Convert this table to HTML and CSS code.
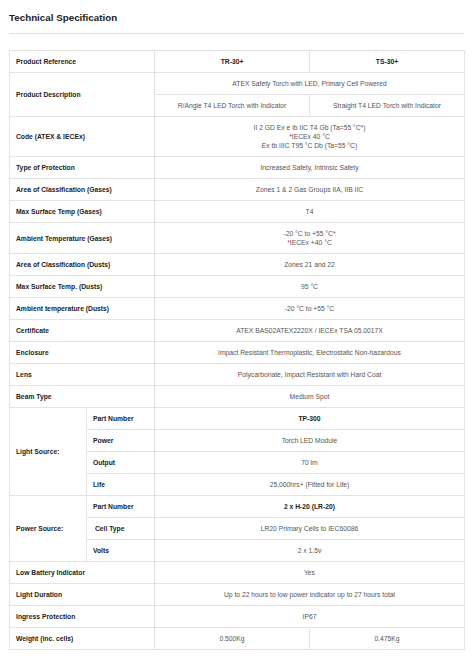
FILE: index.html
```html
<!DOCTYPE html>
<html>
<head>
<meta charset="utf-8">
<link rel="stylesheet" href="styles.css">
</head>
<body>
<div class="page">
  <h1 class="title">Technical Specification</h1>
  <div class="rule"></div>
  <table class="spec">
    <colgroup>
      <col class="c1"><col class="c2"><col class="c3"><col class="c4">
    </colgroup>
    <tr><th colspan="2">Product Reference</th><td class="b">TR-30+</td><td class="b">TS-30+</td></tr>
    <tr><th colspan="2" rowspan="2">Product Description</th><td colspan="2">ATEX Safety Torch with LED, Primary Cell Powered</td></tr>
    <tr><td>R/Angle T4 LED Torch with Indicator</td><td>Straight T4 LED Torch with Indicator</td></tr>
    <tr class="tall3"><th colspan="2">Code (ATEX &amp; IECEx)</th><td colspan="2">II 2 GD Ex e ib IIC T4 Gb (Ta=55 °C*)<br>*IECEx 40 °C<br>Ex tb IIIC T95 °C Db (Ta=55 °C)</td></tr>
    <tr><th colspan="2">Type of Protection</th><td colspan="2">Increased Safety, Intrinsic Safety</td></tr>
    <tr><th colspan="2">Area of Classification (Gases)</th><td colspan="2">Zones 1 &amp; 2 Gas Groups IIA, IIB IIC</td></tr>
    <tr><th colspan="2">Max Surface Temp (Gases)</th><td colspan="2">T4</td></tr>
    <tr class="tall2"><th colspan="2">Ambient Temperature (Gases)</th><td colspan="2">-20 °C to +55 °C*<br>*IECEx +40 °C</td></tr>
    <tr><th colspan="2">Area of Classification (Dusts)</th><td colspan="2">Zones 21 and 22</td></tr>
    <tr><th colspan="2">Max Surface Temp. (Dusts)</th><td colspan="2">95 °C</td></tr>
    <tr><th colspan="2">Ambient temperature (Dusts)</th><td colspan="2">-20 °C to +55 °C</td></tr>
    <tr><th colspan="2">Certificate</th><td colspan="2">ATEX BAS02ATEX2220X / IECEx TSA 05.0017X</td></tr>
    <tr><th colspan="2">Enclosure</th><td colspan="2">Impact Resistant Thermoplastic, Electrostatic Non-hazardous</td></tr>
    <tr><th colspan="2">Lens</th><td colspan="2">Polycarbonate, Impact Resistant with Hard Coat</td></tr>
    <tr><th colspan="2">Beam Type</th><td colspan="2">Medium Spot</td></tr>
    <tr><th rowspan="4">Light Source:</th><th class="sub">Part Number</th><td colspan="2" class="b">TP-300</td></tr>
    <tr><th class="sub">Power</th><td colspan="2">Torch LED Module</td></tr>
    <tr><th class="sub">Output</th><td colspan="2">70 lm</td></tr>
    <tr><th class="sub">Life</th><td colspan="2">25,000hrs+ (Fitted for Life)</td></tr>
    <tr><th rowspan="3">Power Source:</th><th class="sub">Part Number</th><td colspan="2" class="b">2 x H-20 (LR-20)</td></tr>
    <tr><th class="sub">&nbsp;Cell Type</th><td colspan="2">LR20 Primary Cells to IEC60086</td></tr>
    <tr><th class="sub">Volts</th><td colspan="2">2 x 1.5v</td></tr>
    <tr><th colspan="2">Low Battery Indicator</th><td colspan="2">Yes</td></tr>
    <tr><th colspan="2">Light Duration</th><td colspan="2">Up to 22 hours to low power indicator up to 27 hours total</td></tr>
    <tr><th colspan="2">Ingress Protection</th><td colspan="2">IP67</td></tr>
    <tr><th colspan="2">Weight (inc. cells)</th><td>0.500Kg</td><td>0.475Kg</td></tr>
  </table>
</div>
</body>
</html>
```
FILE: styles.css
```css
html, body {
  margin: 0;
  padding: 0;
  background: #ffffff;
}
.page {
  padding: 0 10px 0 9px;
  font-family: "Liberation Sans", Arial, Helvetica, sans-serif;
  color: #333333;
}
.title {
  margin: 0;
  padding-top: 12px;
  height: 21px;
  font-size: 9.8px;
  line-height: 12px;
  font-weight: bold;
  color: #222222;
}
.rule {
  height: 1px;
  background: #e0e0e0;
  margin-bottom: 16px;
}
.spec {
  width: 455px;
  border-collapse: collapse;
  table-layout: fixed;
  font-size: 6.75px;
  line-height: 9px;
  border: 1px solid #e2e2e2;
}
.c1 { width: 77px; }
.c2 { width: 68px; }
.c3 { width: 155px; }
.c4 { width: 155px; }
.spec tr { height: 22px; }
.spec tr.tall3 { height: 40px; }
.spec tr.tall2 { height: 31px; }
.spec th, .spec td {
  border: 1px solid #e2e2e2;
  padding: 0 6px;
  vertical-align: middle;
}
.spec th {
  text-align: left;
  font-weight: bold;
  color: #222222;
  white-space: nowrap;
}
.spec td {
  text-align: center;
  color: #555555;
}
.spec td.b {
  font-weight: bold;
  color: #222222;
}
```
